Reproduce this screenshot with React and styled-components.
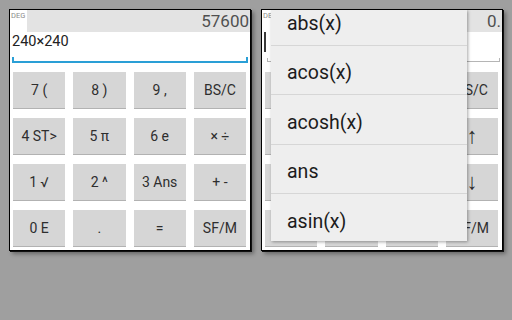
import React from "react";
import styled, { createGlobalStyle } from "styled-components";

const Global = createGlobalStyle`
  html, body { margin: 0; padding: 0; background: #9f9f9f; }
  body { font-family: Roboto, "Noto Sans", sans-serif; }
`;

const Screen = styled.div`
  display: flex;
  gap: 10px;
  padding: 9px 0 0 9px;
  width: 512px;
  height: 320px;
  box-sizing: border-box;
`;

const Panel = styled.div`
  position: relative;
  width: 240px;
  height: 240px;
  border: 1px solid #000;
  box-shadow: 1px 1px 0 #111, 3px 3px 4px rgba(0, 0, 0, 0.35);
  background: #fff;
  overflow: hidden;
  display: flex;
  flex-direction: column;
`;

const Header = styled.div`
  display: flex;
  height: 22px;
`;

const Mode = styled.div`
  width: 17px;
  font-size: 7.5px;
  line-height: 9px;
  padding-top: 1px;
  padding-left: 1px;
  color: #8a8a8a;
  box-sizing: border-box;
`;

const Display = styled.div`
  flex: 1;
  background: #e3e3e3;
  color: #505050;
  font-size: 17px;
  line-height: 23px;
  text-align: right;
  padding-right: 1px;
`;

const Field = styled.div`
  height: 31px;
  display: flex;
  flex-direction: column;
`;

const FieldText = styled.div`
  height: 20px;
  padding-left: 2px;
  font-size: 14.5px;
  line-height: 20px;
  color: #222;
  display: flex;
  align-items: center;
`;

const Cursor = styled.span`
  display: block;
  width: 2px;
  height: 20px;
  background: #3a3a3a;
`;

const Underline = styled.div`
  margin: auto 2px 0 2px;
  height: ${(p) => (p.$focused ? "4px" : "3px")};
  border: ${(p) => (p.$focused ? "2px solid #2a9fd6" : "1px solid #b5b5b5")};
  border-top: none;
  margin-bottom: ${(p) => (p.$focused ? "0" : "1px")};
  margin-left: ${(p) => (p.$focused ? "2px" : "5px")};
`;

const Keypad = styled.div`
  display: grid;
  grid-template-columns: repeat(4, 1fr);
  grid-auto-rows: 37px;
  column-gap: 8px;
  row-gap: 9px;
  padding: 9px 4px 0 3px;
`;

const Key = styled.div`
  background: #d6d6d6;
  border-bottom: 1px solid #b2b2b2;
  box-sizing: border-box;
  display: flex;
  align-items: center;
  justify-content: center;
  font-size: ${(p) => (p.$arrow ? "22px" : "14px")};
  font-weight: ${(p) => (p.$arrow ? 300 : 400)};
  color: #2e2e2e;
  white-space: pre;
`;

const Popup = styled.div`
  position: absolute;
  top: 0;
  left: 9px;
  width: 196px;
  height: 231px;
  background: #eeeeee;
  box-shadow: 1px 1px 3px rgba(0, 0, 0, 0.35);
  overflow: hidden;
`;

const List = styled.div`
  margin-top: -14px;
`;

const Item = styled.div`
  height: 48.5px;
  box-sizing: content-box;
  border-bottom: 1px solid #d6d6d6;
  display: flex;
  align-items: center;
  padding-left: 16px;
  font-size: 19.5px;
  color: #1c1c1c;
  & > span {
    position: relative;
    top: 3px;
  }
`;

const leftKeys = [
  "7 (", "8 )", "9 ,", "BS/C",
  "4 ST>", "5 π", "6 e", "× ÷",
  "1 √", "2 ^", "3 Ans", "+ -",
  "0 E", ".", "=", "SF/M",
];

const rightKeys = [
  "", "", "", "BS/C",
  "", "", "", "↑",
  "", "", "", "↓",
  "", "", "", "SF/M",
];

const items = ["abs(x)", "acos(x)", "acosh(x)", "ans", "asin(x)"];

function Calc({ value, input, focused, keys, children }) {
  return (
    <Panel>
      <Header>
        <Mode>DEG</Mode>
        <Display>{value}</Display>
      </Header>
      <Field>
        <FieldText>{input !== null ? input : <Cursor />}</FieldText>
        <Underline $focused={focused} />
      </Field>
      <Keypad>
        {keys.map((k, i) => (
          <Key key={i} $arrow={k === "↑" || k === "↓"}>{k}</Key>
        ))}
      </Keypad>
      {children}
    </Panel>
  );
}

export default function App() {
  return (
    <>
      <Global />
      <Screen>
        <Calc value="57600" input="240×240" focused keys={leftKeys} />
        <Calc value="0." input={null} focused={false} keys={rightKeys}>
          <Popup>
            <List>
              {items.map((t) => (
                <Item key={t}><span>{t}</span></Item>
              ))}
            </List>
          </Popup>
        </Calc>
      </Screen>
    </>
  );
}
